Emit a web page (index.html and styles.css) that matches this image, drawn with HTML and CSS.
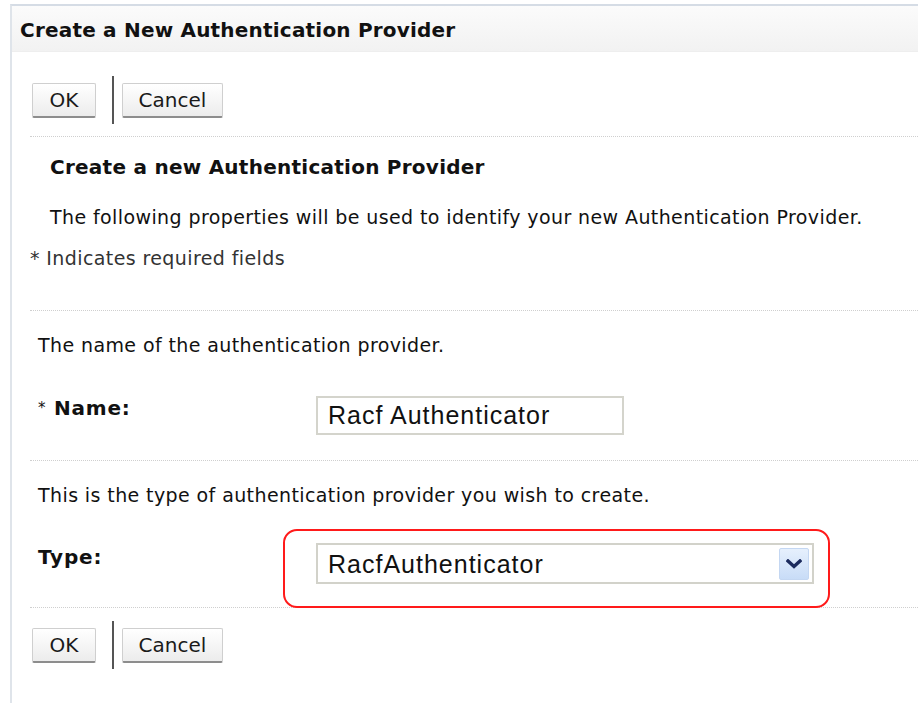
FILE: index.html
```html
<!DOCTYPE html>
<html>
<head>
<meta charset="utf-8">
<link rel="stylesheet" href="styles.css">
</head>
<body>
<div class="panel">
  <div class="panel-header">Create a New Authentication Provider</div>
  <div class="panel-body">
    <div class="btn-row">
      <button class="btn btn-ok">OK</button>
      <span class="btn-sep"></span>
      <button class="btn btn-cancel">Cancel</button>
    </div>
    <div class="section intro">
      <div class="intro-title">Create a new Authentication Provider</div>
      <div class="intro-text">The following properties will be used to identify your new Authentication Provider.</div>
      <div class="req-note">* Indicates required fields</div>
    </div>
    <div class="section field-section">
      <div class="field-desc">The name of the authentication provider.</div>
      <div class="field-row name-row">
        <div class="field-label"><span class="req">*</span><b>Name:</b></div>
        <div class="text-input">Racf Authenticator</div>
      </div>
    </div>
    <div class="section field-section">
      <div class="field-desc">This is the type of authentication provider you wish to create.</div>
      <div class="field-row type-row">
        <div class="field-label"><b>Type:</b></div>
        <div class="highlight">
          <div class="select">
            <span class="select-value">RacfAuthenticator</span>
            <span class="select-btn">
              <svg width="16" height="10" viewBox="0 0 16 10"><path d="M2 2 L8 7.5 L14 2" fill="none" stroke="#1c2b5e" stroke-width="3.4" stroke-linecap="square" stroke-linejoin="miter"/></svg>
            </span>
          </div>
        </div>
      </div>
    </div>
    <div class="section btn-section">
      <div class="btn-row bottom">
        <button class="btn btn-ok">OK</button>
        <span class="btn-sep"></span>
        <button class="btn btn-cancel">Cancel</button>
      </div>
    </div>
  </div>
</div>
</body>
</html>
```
FILE: styles.css
```css
html, body {
  margin: 0;
  padding: 0;
  background: #ffffff;
}
body {
  font-family: "DejaVu Sans", sans-serif;
  color: #111;
  height: 703px;
  overflow: hidden;
}
.panel {
  margin: 4px 0 0 10px;
  border-top: 2px solid #d5dce5;
  border-left: 2px solid #dfe4ea;
  height: 699px;
  box-sizing: border-box;
}
.panel-header {
  height: 46px;
  box-sizing: border-box;
  padding: 0 0 0 8px;
  background: linear-gradient(#fbfbfb, #f2f2f2);
  border-bottom: 1px solid #eeeeee;
  font-weight: bold;
  font-size: 20px;
  letter-spacing: 0.2px;
  line-height: 48px;
  color: #111;
}
.panel-body {
  padding-left: 18px;
}
.btn-row {
  display: flex;
  align-items: center;
  height: 48px;
  margin-top: 24px;
  padding-left: 2px;
}
.btn {
  font-family: "DejaVu Sans", sans-serif;
  font-size: 20px;
  color: #1a1a1a;
  height: 35px;
  box-sizing: border-box;
  border: 1px solid #cfcfcf;
  border-bottom: 2px solid #8d8d8d;
  border-radius: 2px;
  background: linear-gradient(#ffffff, #ececec);
  padding: 0;
  margin: 0;
}
.btn-ok { width: 64px; }
.btn-cancel { width: 101px; }
.btn-sep {
  width: 2px;
  height: 48px;
  background: #555;
  margin: 0 8px 0 16px;
}
.section {
  border-top: 1px dotted #cfcfcf;
}
.intro {
  margin-top: 12px;
  padding-top: 18px;
  height: 174px;
  box-sizing: border-box;
  font-size: 19px;
  letter-spacing: 0.4px;
  line-height: 24px;
}
.intro-title {
  font-weight: bold;
  font-size: 20px;
  letter-spacing: 0.25px;
  padding-left: 20px;
}
.intro-text {
  padding-left: 20px;
  margin-top: 26px;
}
.req-note {
  margin-top: 17px;
  color: #333;
}
.field-section {
  font-size: 19px;
  letter-spacing: 0.4px;
  line-height: 24px;
  padding-left: 8px;
}
.field-desc {
  padding-top: 22px;
}
.name-row {
  display: grid;
  grid-template-columns: 278px 308px;
  align-items: center;
  align-content: start;
  margin-top: 39px;
  height: 64px;
}
.name-row .field-label { margin-top: -16px; }
.field-label b {
  font-size: 20px;
  letter-spacing: 0.8px;
}
.req {
  font-weight: normal;
  font-size: 15px;
  vertical-align: top;
  margin-right: 8px;
}
.text-input {
  height: 39px;
  box-sizing: border-box;
  border: 2px solid #d4d4cc;
  font-family: "Liberation Sans", Arial, sans-serif;
  font-size: 25px;
  letter-spacing: 1px;
  line-height: 35px;
  padding-left: 10px;
  color: #111;
  background: #fff;
}
.type-row {
  display: grid;
  grid-template-columns: 245px auto;
  align-items: start;
  margin-top: 22px;
}
.type-row .field-label {
  padding-top: 16px;
}
.highlight {
  position: relative;
  z-index: 1;
  width: 547px;
  height: 79px;
  box-sizing: border-box;
  border: 2px solid #ff1a1a;
  border-radius: 14px;
  padding: 12px 14px 0 31px;
  margin-bottom: -1px;
}
.select {
  display: flex;
  align-items: center;
  justify-content: space-between;
  height: 41px;
  box-sizing: border-box;
  border: 2px solid #d2d2ca;
  background: #fff;
  padding: 0 3px 0 10px;
}
.select-value {
  font-family: "Liberation Sans", Arial, sans-serif;
  font-size: 25px;
  letter-spacing: 1px;
  color: #111;
}
.select-btn {
  width: 30px;
  height: 32px;
  box-sizing: border-box;
  border: 1px solid #c4d7f2;
  border-radius: 2px;
  background: linear-gradient(#e6f0fd, #c8dcf7);
  display: flex;
  align-items: center;
  justify-content: center;
}
.btn-row.bottom {
  margin-top: 13px;
}
```
